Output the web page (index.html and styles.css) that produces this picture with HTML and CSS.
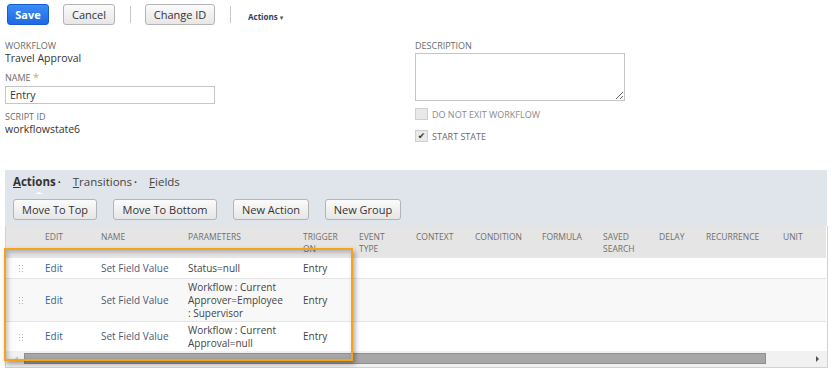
FILE: index.html
```html
<!DOCTYPE html>
<html lang="en">
<head>
    <meta charset="UTF-8">
    <title>Workflow State - Entry</title>
    <link rel="stylesheet" href="styles.css">
</head>
<body>
    <!-- Top toolbar -->
    <div class="toolbar">
        <button class="btn btn-primary">Save</button>
        <button class="btn">Cancel</button>
        <span class="sep"></span>
        <button class="btn">Change ID</button>
        <span class="sep"></span>
        <span class="menu">Actions <span class="caret">&#9662;</span></span>
    </div>

    <!-- Main fields -->
    <div class="fields">
        <div class="col">
            <div class="label">Workflow</div>
            <div class="value">Travel Approval</div>
            <div class="label label-gap">Name <span class="req">*</span></div>
            <input type="text" class="text-input" value="Entry">
            <div class="label label-gap">Script ID</div>
            <div class="value">workflowstate6</div>
        </div>
        <div class="col">
            <div class="label">Description</div>
            <textarea class="textarea"></textarea>
            <label class="check disabled"><span class="box"></span>Do not exit workflow</label>
            <label class="check"><span class="box checked">&#10004;</span>Start state</label>
        </div>
    </div>

    <!-- Sublist -->
    <div class="subtabs">
        <div class="tabs">
            <span class="tab active"><u>A</u>ctions<span class="dot">&bull;</span></span>
            <span class="tab"><u>T</u>ransitions<span class="dot">&bull;</span></span>
            <span class="tab"><u>F</u>ields</span>
        </div>
        <div class="tab-buttons">
            <button class="btn btn-sub">Move To Top</button>
            <button class="btn btn-sub">Move To Bottom</button>
            <button class="btn btn-sub">New Action</button>
            <button class="btn btn-sub">New Group</button>
        </div>
        <div class="grid-wrap">
            <table class="grid">
                <colgroup>
                    <col style="width:35px"><col style="width:56px"><col style="width:87px">
                    <col style="width:115px"><col style="width:56px"><col style="width:57px">
                    <col style="width:59px"><col style="width:67px"><col style="width:61px">
                    <col style="width:56px"><col style="width:47px"><col style="width:77px">
                    <col style="width:47px">
                </colgroup>
                <thead>
                    <tr>
                        <th></th><th>Edit</th><th>Name</th><th>Parameters</th>
                        <th>Trigger<br>On</th><th>Event<br>Type</th><th>Context</th>
                        <th>Condition</th><th>Formula</th><th>Saved<br>Search</th>
                        <th>Delay</th><th>Recurrence</th><th>Unit</th>
                    </tr>
                </thead>
                <tbody>
                    <tr>
                        <td class="drag"><span class="handle"></span></td>
                        <td class="link">Edit</td><td class="name">Set Field Value</td>
                        <td class="params">Status=null</td><td>Entry</td>
                        <td></td><td></td><td></td><td></td><td></td><td></td><td></td><td></td>
                    </tr>
                    <tr class="alt">
                        <td class="drag"><span class="handle"></span></td>
                        <td class="link">Edit</td><td class="name">Set Field Value</td>
                        <td class="params">Workflow : Current Approver=Employee : Supervisor</td><td>Entry</td>
                        <td></td><td></td><td></td><td></td><td></td><td></td><td></td><td></td>
                    </tr>
                    <tr>
                        <td class="drag"><span class="handle"></span></td>
                        <td class="link">Edit</td><td class="name">Set Field Value</td>
                        <td class="params">Workflow : Current Approval=null</td><td>Entry</td>
                        <td></td><td></td><td></td><td></td><td></td><td></td><td></td><td></td>
                    </tr>
                </tbody>
            </table>
            <div class="hscroll">
                <span class="arrow arrow-left"></span>
                <div class="track"><div class="thumb"></div></div>
                <span class="arrow arrow-right"></span>
            </div>
        </div>
        <!-- annotation box over the first columns -->
        <div class="highlight"></div>
    </div>
</body>
</html>
```

FILE: styles.css
```css
body {
    margin: 0;
    font-family: "Open Sans", "DejaVu Sans", sans-serif;
    color: #333;
    background: #fff;
}
.toolbar {
    display: flex;
    align-items: center;
    padding: 4px 7px 0;
    height: 21px;
}
.btn {
    height: 21px;
    padding: 0 9px;
    border: 1px solid #b4b4b4;
    border-radius: 3px;
    background: linear-gradient(#fbfbfb, #e6e6e6);
    color: #333;
    font-family: inherit;
    font-size: 11px;
    line-height: 19px;
    white-space: nowrap;
    margin-right: 14px;
}
.btn-primary {
    width: 42px;
    padding: 0;
    background: linear-gradient(#3b8cf5, #1d6ae3);
    border-color: #175ccc;
    color: #fff;
    font-weight: bold;
}
.toolbar .btn:nth-child(2) {
    width: 52px;
    padding: 0;
}
.toolbar .btn:nth-child(4) {
    width: 70px;
    padding: 0;
}
.sep {
    width: 1px;
    height: 17px;
    background: #c8c8c8;
    margin: 0 14px 0 1px;
}
.menu {
    margin-left: 3px;
    font-size: 8px;
    font-weight: bold;
    color: #2a3f66;
    padding-top: 3px;
}
.caret {
    font-size: 7px;
    color: #555;
}

/* main fields */
.fields {
    display: grid;
    grid-template-columns: 410px 1fr;
    padding: 15px 5px 0;
    height: 130px;
}
.label {
    font-size: 9px;
    line-height: 11px;
    text-transform: uppercase;
    color: #6b6b6b;
}
.label-gap {
    margin-top: 7px;
}
.req {
    color: #e8a33d;
    font-size: 11px;
    line-height: 9px;
}
.value {
    font-size: 10.5px;
    line-height: 14px;
    color: #333;
}
.text-input {
    display: block;
    box-sizing: border-box;
    width: 210px;
    height: 18px;
    margin: 3px 0 0;
    padding: 0 4px;
    border: 1px solid #c5c5c5;
    font-family: inherit;
    font-size: 10.5px;
    color: #333;
}
.textarea {
    display: block;
    box-sizing: border-box;
    width: 210px;
    height: 48px;
    margin: 2px 0 0;
    border: 1px solid #c5c5c5;
    resize: both;
}
.check {
    display: flex;
    align-items: center;
    font-size: 9px;
    text-transform: uppercase;
    color: #6b6b6b;
    margin-top: 7px;
    height: 12px;
}
.check.disabled {
    color: #8a8a8a;
}
.check + .check {
    margin-top: 10px;
}
.box {
    box-sizing: border-box;
    width: 13px;
    height: 12px;
    margin-right: 4px;
    border: 1px solid #cfcfcf;
    background: #e9e9e9;
    font-size: 9px;
    line-height: 10px;
    text-align: center;
    color: #333;
}

/* sublist */
.subtabs {
    position: relative;
    margin: 0 7px 0 5px;
    background: #e0e4eb;
}
.tabs {
    display: flex;
    align-items: center;
    height: 22px;
    padding-left: 8px;
    font-size: 11.5px;
}
.tab {
    position: relative;
    margin-right: 12px;
    color: #444;
}
.tab.active {
    font-weight: bold;
    color: #333;
}
.tab.active::after {
    content: "";
    position: absolute;
    left: 22px;
    bottom: -5px;
    border: 4px solid transparent;
    border-bottom: 2px solid #fff;
    border-top: 0;
}
.dot {
    font-size: 8px;
    margin-left: 2px;
    font-weight: normal;
    vertical-align: 1px;
}
.tab-buttons {
    display: flex;
    padding: 7px 8px 6px;
}
.btn-sub {
    padding: 0;
    margin-right: 16px;
    font-size: 11px;
}
.btn-sub:nth-child(1) { width: 84px; }
.btn-sub:nth-child(2) { width: 104px; }
.btn-sub:nth-child(3) { width: 76px; }
.btn-sub:nth-child(4) { width: 76px; }
.grid-wrap {
    background: #fff;
    border: 1px solid #d2d2d2;
    border-top: 0;
    margin-right: -1px;
}
.grid {
    border-collapse: collapse;
    table-layout: fixed;
    width: 819px;
    font-size: 10px;
}
.grid th {
    background: #e5e5e5;
    color: #6f6f6f;
    font-weight: normal;
    font-size: 8.5px;
    text-transform: uppercase;
    text-align: left;
    vertical-align: top;
    line-height: 12px;
    height: 31px;
    padding: 5px 4px 0;
    box-sizing: border-box;
}
.grid td {
    padding: 2px 4px 1px;
    line-height: 13px;
    height: 17px;
    border-top: 1px solid #e6e6e6;
    color: #444;
    vertical-align: middle;
}
.grid td.params {
    padding-right: 14px;
}
.grid tr.alt td {
    background: #f8f8f8;
}
.grid td.link {
    color: #3d5f92;
}
.grid td.name {
    color: #4a5a7a;
}
.grid td.drag {
    padding-left: 12px;
}
.handle {
    display: block;
    width: 5px;
    height: 8px;
    background-image: radial-gradient(circle, #b5b5b5 0.8px, transparent 1px);
    background-size: 3px 3px;
}
.hscroll {
    display: flex;
    align-items: center;
    height: 16px;
    background: #f1f1f1;
}
.arrow {
    width: 0;
    height: 0;
    border-top: 3px solid transparent;
    border-bottom: 3px solid transparent;
}
.arrow-left {
    margin: 0 6px 0 9px;
    border-right: 3px solid #c6c6c6;
}
.arrow-right {
    margin: 0 8px 0 auto;
    border-left: 3px solid #505050;
}
.track {
    flex: 0 0 742px;
}
.thumb {
    height: 11px;
    background: #a7a7a7;
    border: 1px solid #8f8f8f;
    box-sizing: border-box;
}
.highlight {
    position: absolute;
    left: -1px;
    top: 78px;
    width: 345px;
    height: 109px;
    border: 2px solid #f7a21b;
    box-shadow: 2px 3px 5px rgba(0, 0, 0, 0.35), inset 2px 2px 5px rgba(0, 0, 0, 0.25);
}
```
